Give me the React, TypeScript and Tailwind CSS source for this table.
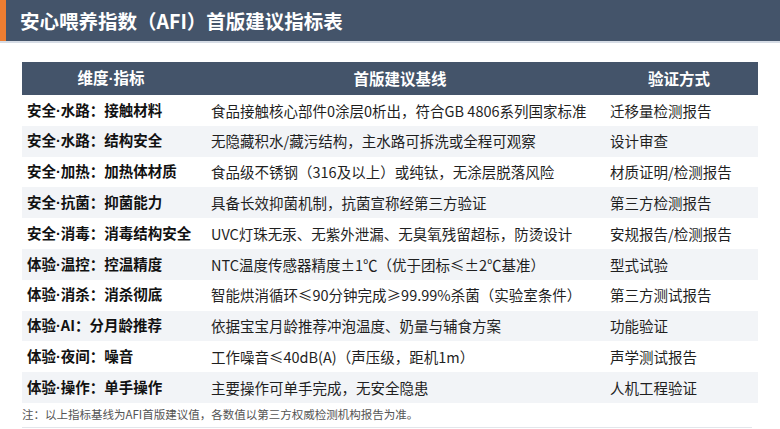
import React from "react";

const rows: [string, string, string][] = [
  ["安全·水路：接触材料", "食品接触核心部件0涂层0析出，符合GB 4806系列国家标准", "迁移量检测报告"],
  ["安全·水路：结构安全", "无隐藏积水/藏污结构，主水路可拆洗或全程可观察", "设计审查"],
  ["安全·加热：加热体材质", "食品级不锈钢（316及以上）或纯钛，无涂层脱落风险", "材质证明/检测报告"],
  ["安全·抗菌：抑菌能力", "具备长效抑菌机制，抗菌宣称经第三方验证", "第三方检测报告"],
  ["安全·消毒：消毒结构安全", "UVC灯珠无汞、无紫外泄漏、无臭氧残留超标，防烫设计", "安规报告/检测报告"],
  ["体验·温控：控温精度", "NTC温度传感器精度±1℃（优于团标≤±2℃基准）", "型式试验"],
  ["体验·消杀：消杀彻底", "智能烘消循环≤90分钟完成≥99.99%杀菌（实验室条件）", "第三方测试报告"],
  ["体验·AI：分月龄推荐", "依据宝宝月龄推荐冲泡温度、奶量与辅食方案", "功能验证"],
  ["体验·夜间：噪音", "工作噪音≤40dB(A)（声压级，距机1m）", "声学测试报告"],
  ["体验·操作：单手操作", "主要操作可单手完成，无安全隐患", "人机工程验证"],
];

function Dotted({ text }: { text: string }) {
  const parts = text.split("·");
  return (
    <>
      {parts.map((p, i) => (
        <React.Fragment key={i}>
          {i > 0 && <span className="font-['Liberation_Sans']">·</span>}
          {p}
        </React.Fragment>
      ))}
    </>
  );
}

export default function App() {
  return (
    <div
      className="w-[780px] h-[429px] bg-white overflow-hidden"
      style={{ fontFamily: '"Noto Sans CJK SC", "Noto Sans", sans-serif' }}
    >
      <div className="flex h-[41px] bg-[#44546a] border-b-2 border-[#d6dce5] box-content">
        <div className="w-[6px] bg-[#ed7d31]" />
        <div className="flex items-center pl-[14px] text-[19.5px] font-bold text-white leading-none">
          安心喂养指数（AFI）首版建议指标表
        </div>
      </div>
      <div className="ml-[22px] mt-[19px] w-[736px]">
        <div className="grid grid-cols-[178px_400px_158px] h-[33px] bg-[#44546a] text-white font-bold text-[15.5px] items-center">
          <div className="text-center">
            <Dotted text="维度·指标" />
          </div>
          <div className="text-center">首版建议基线</div>
          <div className="text-center">验证方式</div>
        </div>
        {rows.map((r, i) => (
          <div
            key={i}
            className={
              "grid grid-cols-[178px_400px_158px] h-[30.8px] items-center text-[14.5px] text-[#1f1f1f] " +
              (i % 2 === 1 ? "bg-[#f2f4f7]" : "bg-white")
            }
          >
            <div className="pl-[5px] font-bold text-[#111] whitespace-nowrap">
              <Dotted text={r[0]} />
            </div>
            <div className="pl-[11px] whitespace-nowrap">{r[1]}</div>
            <div className="pl-[10px] whitespace-nowrap">{r[2]}</div>
          </div>
        ))}
        <div className="h-[24px] flex items-center text-[11.5px] text-[#555]">
          注：以上指标基线为AFI首版建议值，各数值以第三方权威检测机构报告为准。
        </div>
        <div className="w-[730px] h-px bg-[#e3e6eb]" />
      </div>
    </div>
  );
}
